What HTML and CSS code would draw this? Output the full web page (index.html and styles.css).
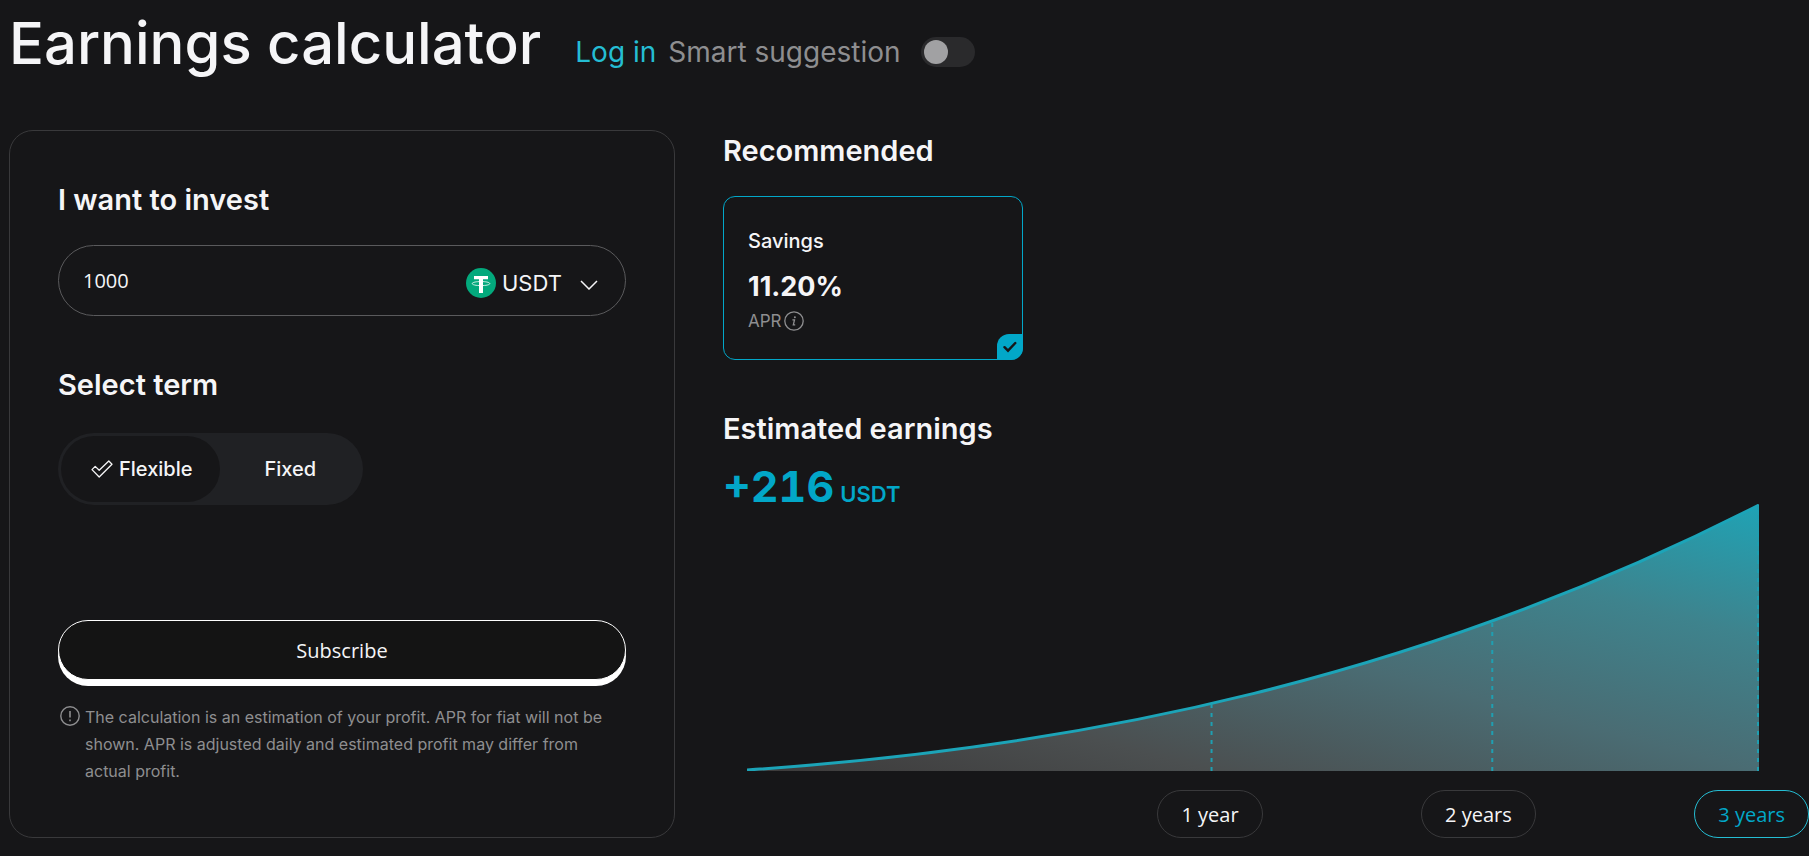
FILE: index.html
```html
<!DOCTYPE html>
<html lang="en">
<head>
  <meta charset="UTF-8">
  <meta name="viewport" content="width=device-width, initial-scale=1.0">
  <title>Earnings calculator</title>
  <link rel="stylesheet" href="styles.css">
</head>
<body>
  <header class="page-header">
    <h1>Earnings calculator</h1>
    <div class="suggestion">
      <a href="#login">Log in</a>
      <label for="smartToggle">Smart suggestion</label>
      <input type="checkbox" id="smartToggle" class="toggle">
    </div>
  </header>

  <main class="calculator">
    <form class="invest-card">
      <h2><label for="amount">I want to invest</label></h2>
      <div class="amount-box">
        <input type="text" id="amount" value="1000" inputmode="decimal">
        <div class="currency">
          <svg class="coin" viewBox="0 0 30 30" aria-hidden="true">
            <circle cx="15" cy="15" r="15" fill="#03a97c"/>
            <path d="M8 8h14v3.2h-5V25h-4V11.2H8z" fill="#fff"/>
            <path d="M13 13.6C8.800 13.800 6.200 14.600 6.200 15.600C6.200 16.800 10 17.600 15 17.600S23.800 16.800 23.800 15.600C23.800 14.600 21.200 13.800 17 13.600" fill="none" stroke="#fff" stroke-width="0.8"/>
          </svg>
          <select aria-label="Currency">
            <option>USDT</option>
          </select>
          <svg class="chevron" viewBox="0 0 18 10" aria-hidden="true">
            <path d="M1 1l8 8 8-8" fill="none" stroke="#f5f5f7" stroke-width="1.5"/>
          </svg>
        </div>
      </div>

      <h2>Select term</h2>
      <div class="terms">
        <button type="button" class="term active" aria-pressed="true">
          <svg class="term-check" viewBox="0 0 22 18" aria-hidden="true">
            <path d="M1 9.6L4.2 6.4 8.2 10.2 17.8 1 21 4.2 8.2 17z" fill="none" stroke="#f5f5f7" stroke-width="1.3" stroke-linejoin="round"/>
          </svg>
          Flexible
        </button>
        <button type="button" class="term" aria-pressed="false">Fixed</button>
      </div>

      <button type="submit" class="subscribe">Subscribe</button>

      <div class="note">
        <svg class="note-icon" viewBox="0 0 20 20" aria-hidden="true">
          <circle cx="10" cy="10" r="9.2" fill="none" stroke="#8e8e90" stroke-width="1.4"/>
          <path d="M10 5v6.4M10 13.4v1.8" stroke="#8e8e90" stroke-width="1.6"/>
        </svg>
        <p>The calculation is an estimation of your profit. APR for fiat will not be shown. APR is adjusted daily and estimated profit may differ from actual profit.</p>
      </div>
    </form>

    <section class="results">
      <h2>Recommended</h2>
      <div class="product">
        <h3>Savings</h3>
        <strong class="rate">11.20%</strong>
        <div class="apr">
          <span>APR</span>
          <svg class="info-icon" viewBox="0 0 20 20" aria-hidden="true">
            <circle cx="10" cy="10" r="9.2" fill="none" stroke="#8e8e90" stroke-width="1.3"/>
            <circle cx="10.9" cy="6.2" r="1" fill="#8e8e90"/>
            <path d="M8.4 8.8h2.1l-1.2 5h1.9" fill="none" stroke="#8e8e90" stroke-width="1.3"/>
          </svg>
        </div>
        <span class="selected">
          <svg viewBox="0 0 14 12" aria-hidden="true">
            <path d="M1.5 6.2L5 9.7 12.3 2" fill="none" stroke="#161618" stroke-width="2.4" stroke-linecap="round"/>
          </svg>
        </span>
      </div>

      <h2>Estimated earnings</h2>
      <p class="earnings"><span class="earnings-value">+216</span> <span class="earnings-unit">USDT</span></p>

      <svg class="chart" viewBox="0 0 1013 267" preserveAspectRatio="none" role="img" aria-label="Earnings growth over 3 years">
        <defs>
          <linearGradient id="area" x1="0" y1="1" x2="1" y2="0">
            <stop offset="0" stop-color="#3c3a3a"/>
            <stop offset="0.23" stop-color="#4b4f50"/>
            <stop offset="0.5" stop-color="#4a6c73"/>
            <stop offset="0.75" stop-color="#3e838d"/>
            <stop offset="1" stop-color="#1fa3b5"/>
          </linearGradient>
        </defs>
        <path d="M0 266C340 243 676 173 1013 1V267H0z" fill="url(#area)"/>
        <path class="curve" d="M0 266C340 243 676 173 1013 1"/>
        <path class="marker" d="M465 267V199M746 267V119M1012 267V2"/>
      </svg>

      <div class="years">
        <button type="button">1 year</button>
        <button type="button">2 years</button>
        <button type="button" class="active">3 years</button>
      </div>
    </section>
  </main>
</body>
</html>
```

FILE: styles.css
```css
* {
  box-sizing: border-box;
  margin: 0;
  padding: 0;
}

body {
  background: #161618;
  color: #f5f5f7;
  font-family: Inter, "Liberation Sans", sans-serif;
  padding-left: 9px;
}

button,
input,
select {
  font: inherit;
  color: inherit;
  background: none;
  border: none;
}

button,
select {
  cursor: pointer;
}

svg {
  display: block;
  flex-shrink: 0;
}

.page-header {
  display: flex;
  align-items: center;
  gap: 34px;
  height: 86px;
  margin-bottom: 44px;
}

h1 {
  font-size: 58px;
  font-weight: 500;
}

h2 {
  font-size: 29px;
  line-height: 42px;
  font-weight: 600;
}

.suggestion {
  display: flex;
  align-items: center;
  gap: 12px;
  margin-top: 18px;
  font-size: 28px;
  color: #8e8e90;
}

.suggestion a {
  color: #25bdd3;
  text-decoration: none;
}

.toggle {
  appearance: none;
  width: 54px;
  height: 30px;
  margin-left: 8px;
  padding: 3px;
  border-radius: 15px;
  background: #2a2a2c;
  cursor: pointer;
}

.toggle::before {
  content: "";
  display: block;
  width: 24px;
  height: 24px;
  border-radius: 50%;
  background: #a1a1a3;
}

.toggle:checked::before {
  margin-left: auto;
}

.calculator {
  display: grid;
  grid-template-columns: 37% 1fr;
  gap: 48px;
}

/* Left card */
.invest-card {
  padding: 48px;
  border: 1px solid #39393b;
  border-radius: 24px;
}

.amount-box {
  display: flex;
  align-items: center;
  height: 71px;
  margin: 24px 0 48px;
  padding: 0 27px 0 24px;
  border: 1px solid #5a5a5c;
  border-radius: 36px;
}

.amount-box input {
  flex: 1;
  min-width: 0;
  font-family: "Open Sans", "Noto Sans", sans-serif;
  font-size: 20px;
  outline: none;
}

.currency {
  display: flex;
  align-items: center;
  padding-top: 4px;
}

.currency select {
  appearance: none;
  font-size: 22px;
  outline: none;
}

.coin {
  width: 30px;
  height: 30px;
  margin-right: 6px;
}

.chevron {
  width: 18px;
  height: 10px;
  margin: 4px 0 0 18px;
}

.terms {
  display: flex;
  width: fit-content;
  height: 72px;
  margin: 27px 0 115px;
  padding: 3px;
  border-radius: 36px;
  background: #202124;
}

.term {
  display: flex;
  align-items: center;
  gap: 6px;
  padding: 0 44px;
  border-radius: 33px;
  font-size: 20px;
  font-weight: 500;
}

.term.active {
  padding: 0 28px 0 30px;
  background: #161618;
}

.term-check {
  width: 22px;
  height: 18px;
}

.subscribe {
  display: block;
  width: 100%;
  height: 60px;
  border: 1px solid #fff;
  border-radius: 30px;
  background: #141414;
  box-shadow: 0 6px #fff;
  font-family: "Open Sans", "Noto Sans", sans-serif;
  font-size: 20px;
}

.note {
  display: flex;
  gap: 5px;
  margin-top: 24px;
  padding-left: 2px;
  font-size: 16px;
  line-height: 27px;
  color: #8e8e90;
}

.note-icon {
  width: 20px;
  height: 20px;
  margin-top: 2px;
}

/* Right column */
.product {
  position: relative;
  width: 300px;
  height: 164px;
  margin: 24px 0 48px;
  padding: 29px 24px 0;
  border: 1px solid #02a7c8;
  border-radius: 12px;
}

.product h3 {
  font-size: 20px;
  line-height: 30px;
  font-weight: 500;
}

.rate {
  display: block;
  margin-top: 12px;
  font-size: 27px;
  line-height: 38px;
  font-weight: 700;
}

.apr {
  display: flex;
  align-items: center;
  gap: 2px;
  font-size: 17px;
  line-height: 30px;
  color: #8e8e90;
}

.info-icon {
  width: 20px;
  height: 20px;
}

.selected {
  position: absolute;
  right: -1px;
  bottom: -1px;
  display: flex;
  align-items: center;
  justify-content: center;
  width: 26px;
  height: 26px;
  border-radius: 12px 0 12px 0;
  background: #02a7c8;
}

.selected svg {
  width: 14px;
  height: 12px;
}

.earnings {
  display: flex;
  align-items: baseline;
  gap: 6px;
  height: 54px;
  color: #02a7c8;
}

.earnings-value {
  font-size: 43px;
  line-height: 72px;
  font-weight: 700;
  font-variant-numeric: tabular-nums;
}

.earnings-unit {
  font-size: 22px;
  font-weight: 600;
}

.chart {
  width: calc(100% - 74px);
  height: 267px;
  margin-left: 24px;
}

.curve {
  fill: none;
  stroke: #1ca4b8;
  stroke-width: 3;
}

.marker {
  fill: none;
  stroke: #1f9fb1;
  stroke-width: 2;
  stroke-dasharray: 4 5;
}

.years {
  display: flex;
  justify-content: space-between;
  margin-top: 19px;
  padding-left: 40%;
}

.years button {
  height: 48px;
  padding: 0 23px;
  border: 1px solid #39393b;
  border-radius: 24px;
  font-family: "Open Sans", "Noto Sans", sans-serif;
  font-size: 20px;
}

.years .active {
  border-color: #25bdd3;
  color: #02a7c8;
}
```
